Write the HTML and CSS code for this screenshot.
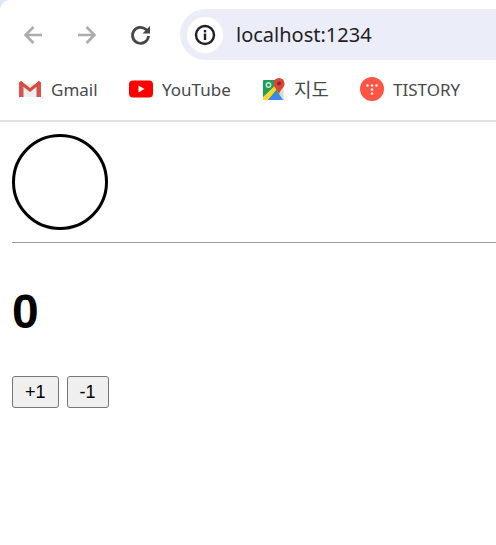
FILE: index.html
```html
<!doctype html>
<html lang="ko">
<head>
  <meta charset="utf-8">
  <meta name="viewport" content="width=device-width, initial-scale=1.0">
  <title>localhost:1234</title>
  <link rel="stylesheet" href="styles.css">
</head>
<body>
  <div class="browser">
    <div class="toolbar">
      <svg class="nav-icon" viewBox="0 0 24 24"><path class="dim" d="M21 12H4.500M12.500 4l-8 8 8 8"/></svg>
      <svg class="nav-icon" viewBox="0 0 24 24"><path class="dim" d="M3 12h16.500M11.500 4l8 8-8 8"/></svg>
      <svg class="nav-icon" viewBox="0 0 24 24"><path class="dark" d="M19.500 13a8 8 0 1 1-2.500-6.500L19 8.500"/><path class="fill" d="M21 3v7.500h-7.500z"/></svg>
      <div class="address">
        <span class="site-info">
          <svg viewBox="0 0 24 24" width="24" height="24"><circle cx="12" cy="12" r="9" fill="none" stroke="#202124" stroke-width="2.400"/><rect x="10.800" y="10.500" width="2.400" height="6.500" fill="#202124"/><rect x="10.800" y="7" width="2.400" height="2.400" fill="#202124"/></svg>
        </span>
        <span class="url">localhost:1234</span>
      </div>
    </div>
    <div class="bookmarks">
      <a class="bookmark gmail">
        <svg viewBox="0 0 24 20" width="24" height="20"><path d="M3 18V5h18v13z" fill="#eee"/><path d="M1 18V3.500L3 2l2.500 2v14z" fill="#d9534a"/><path d="M23 18V3.500L21 2l-2.500 2v14z" fill="#d9534a"/><path d="M3 2l9 7 9-7 1 3-10 8L2 5z" fill="#d9483b"/></svg>
        Gmail
      </a>
      <a class="bookmark youtube">
        <svg viewBox="0 0 24 18" width="24" height="18"><rect width="24" height="17" y="0.500" rx="4" fill="#f00"/><path d="M9.500 5.500v7l6-3.500z" fill="#fff"/></svg>
        YouTube
      </a>
      <a class="bookmark maps">
        <svg viewBox="0 0 22 22" width="22" height="22"><rect y="2" width="19" height="20" rx="1" fill="#1e9e5a"/><circle cx="5.500" cy="7" r="2.200" fill="none" stroke="#cfe8d0" stroke-width="1.400"/><path d="M0 22v-3L17 3l2 2L5 22z" fill="#fdd835"/><path d="M5 22l8-8 8 8z" fill="#4285f4"/><path d="M14 13l5-6h1.500v15H20z" fill="#d8d8d8"/><path d="M16 0a5.500 5.500 0 0 1 5.500 5.500c0 4-4 6-5.500 10.500-1.500-4.500-5.500-6.500-5.500-10.500A5.500 5.500 0 0 1 16 0z" fill="#db4437"/><circle cx="16" cy="5.500" r="2" fill="#8c2a20"/></svg>
        <span class="maps-name">지도</span>
      </a>
      <a class="bookmark tistory">
        <svg viewBox="0 0 24 24" width="24" height="24"><circle cx="12" cy="12" r="12" fill="#ff5544"/><g fill="#fff"><circle cx="7.500" cy="8.500" r="1.200"/><circle cx="12" cy="8.500" r="1.200"/><circle cx="16.500" cy="8.500" r="1.200"/><circle cx="12" cy="12.500" r="1.200"/><circle cx="12" cy="16.500" r="1.200"/></g></svg>
        TISTORY
      </a>
    </div>
  </div>

  <main class="app">
    <div class="circle"></div>
    <hr class="divider">
    <h1 class="count">0</h1>
    <div class="buttons">
      <button class="btn" type="button">+1</button>
      <button class="btn" type="button">-1</button>
    </div>
  </main>
</body>
</html>
```

FILE: styles.css
```css
* {
  box-sizing: border-box;
}

body {
  margin: 0;
  background: #fff;
  overflow: hidden;
}

.browser {
  height: 122px;
  background: #dfe8f8;
  border-bottom: 2px solid #e0e0e0;
  font-family: "Noto Sans", "Noto Sans CJK KR", sans-serif;
}

.toolbar {
  height: 60px;
  padding: 9px 0 0 21px;
  background: #fff;
  border-top-left-radius: 10px;
  display: flex;
  align-items: flex-start;
}

.nav-icon {
  width: 24px;
  height: 24px;
  margin: 14px 30px 0 0;
  flex-shrink: 0;
}

.nav-icon .dim {
  fill: none;
  stroke: #acacac;
  stroke-width: 2.600;
}

.nav-icon .dark {
  fill: none;
  stroke: #474747;
  stroke-width: 2.800;
}

.nav-icon .fill {
  fill: #474747;
}

.address {
  flex: 1;
  height: 51px;
  margin-left: -3px;
  padding-left: 7px;
  background: #ebeef8;
  border-radius: 26px 0 0 26px;
  display: flex;
  align-items: center;
  gap: 13px;
}

.site-info {
  width: 36px;
  height: 36px;
  border-radius: 50%;
  background: #fff;
  display: flex;
  align-items: center;
  justify-content: center;
}

.url {
  font-size: 20px;
  color: #1f2024;
}

.bookmarks {
  height: 60px;
  padding: 0 0 2px 18px;
  background: #fff;
  display: flex;
  align-items: center;
}

.bookmark {
  display: flex;
  align-items: center;
  gap: 9px;
  font-size: 17px;
  color: #47494d;
}

.gmail {
  width: 111px;
}

.youtube {
  width: 134px;
}

.maps {
  width: 97px;
}

.maps-name {
  font-size: 19px;
}

.app {
  padding: 12px 0 0 12px;
  font-family: "Liberation Sans", Arial, sans-serif;
}

.circle {
  width: 96px;
  height: 96px;
  border: 3px solid #000;
  border-radius: 50%;
}

.divider {
  margin: 12px 0 0;
  border: 0;
  border-top: 1px solid #999;
  height: 2px;
}

.count {
  margin: 40px 0 0;
  font-size: 48px;
  line-height: 55px;
  color: #000;
}

.buttons {
  margin-top: 37px;
  display: flex;
  gap: 8px;
}

.btn {
  height: 32px;
  padding: 0 12px;
  font-family: inherit;
  font-size: 18px;
  color: #000;
  background: #efefef;
  border: 1px solid #767676;
  border-radius: 3px;
}
```
